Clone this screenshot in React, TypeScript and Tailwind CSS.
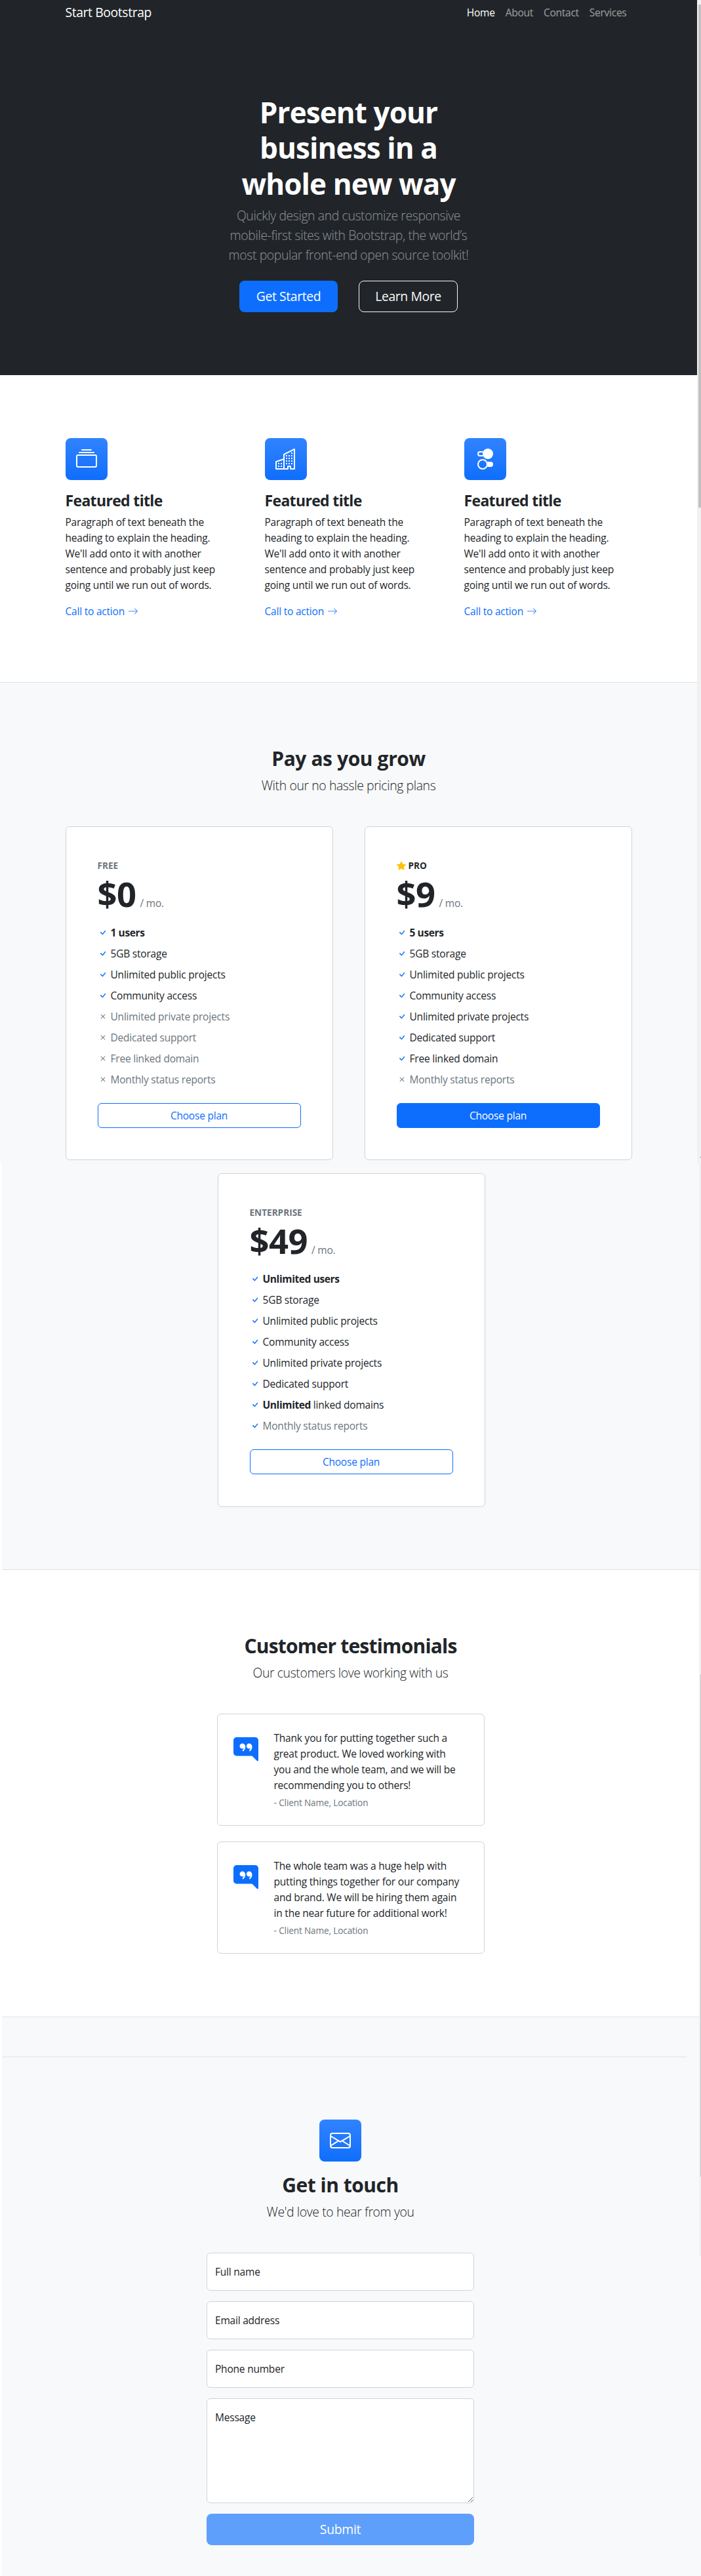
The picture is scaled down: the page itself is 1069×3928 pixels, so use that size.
import type { ReactNode } from "react";
import {
  BsArrowRight,
  BsChatRightQuoteFill,
  BsCheck,
  BsCollection,
  BsEnvelope,
  BsStarFill,
  BsToggles2,
  BsX,
} from "react-icons/bs";

const body = "text-[15.5px] leading-6 tracking-[-0.21px]";
const lead = "text-[19.4px] leading-[30px] font-light tracking-[-0.39px]";
const heading = "pt-px text-[30px] leading-[37px] font-bold";

function BuildingIcon() {
  return (
    <svg width="32" height="32" viewBox="0 0 16 16" fill="currentColor">
      <path
        fillRule="evenodd"
        d="M14.763.075A.5.5 0 0 1 15 .5v15a.5.5 0 0 1-.5.5h-3a.5.5 0 0 1-.5-.5V14h-1v1.5a.5.5 0 0 1-.5.5h-9a.5.5 0 0 1-.5-.5V10a.5.5 0 0 1 .342-.474L6 7.64V4.5a.5.5 0 0 1 .276-.447l8-4a.5.5 0 0 1 .487.022zM6 8.694 1 10.36V15h5V8.694zM7 15h2v-1.5a.5.5 0 0 1 .5-.5h2a.5.5 0 0 1 .5.5V15h2V1.309l-7 3.5V15z"
      />
      <path d="M2 11h1v1H2v-1zm2 0h1v1H4v-1zm-2 2h1v1H2v-1zm2 0h1v1H4v-1zm4-4h1v1H8V9zm2 0h1v1h-1V9zm-2 2h1v1H8v-1zm2 0h1v1h-1v-1zm2-2h1v1h-1V9zm0 2h1v1h-1v-1zM8 7h1v1H8V7zm2 0h1v1h-1V7zm2 0h1v1h-1V7zM8 5h1v1H8V5zm2 0h1v1h-1V5zm2 0h1v1h-1V5zm0-2h1v1h-1V3z" />
    </svg>
  );
}

function IconTile({ children }: { children: ReactNode }) {
  return (
    <div className="flex size-16 items-center justify-center rounded-lg bg-linear-to-b from-[#3083ff] to-[#0d6efd] text-[32px] text-white">
      {children}
    </div>
  );
}

function Feature({ icon }: { icon: ReactNode }) {
  return (
    <div className="w-64">
      <IconTile>{icon}</IconTile>
      <h2 className="mt-[17px] text-[23px] leading-7 font-bold tracking-[-0.66px]">Featured title</h2>
      <p className={`mt-[7px] ${body}`}>
        Paragraph of text beneath the
        <br />
        heading to explain the heading.
        <br />
        We'll add onto it with another
        <br />
        sentence and probably just keep
        <br />
        going until we run out of words.
      </p>
      <a className={`mt-4 flex items-center gap-[5px] text-[#0d6efd] ${body}`}>
        Call to action
        <BsArrowRight className="size-4 opacity-80" />
      </a>
    </div>
  );
}

type Item = { bold?: string; text?: string; icon?: "check" | "x"; muted?: boolean };

function Plan({
  name,
  price,
  items,
  star,
  filled,
  listClass = "mt-[17px]",
}: {
  name: string;
  price: string;
  items: Item[];
  star?: boolean;
  filled?: boolean;
  listClass?: string;
}) {
  return (
    <div className="h-[509px] w-[408px] rounded-md border border-[#d3d3d4] bg-white p-12">
      <div
        className={`flex items-center gap-1 text-[13.6px] leading-[21px] font-bold ${
          star ? "text-[#212529]" : "text-[#6c757d]"
        }`}
      >
        {star && <BsStarFill className="size-3.5 text-[#ffc107]" />}
        {name}
      </div>
      <div className="flex h-[63px] items-baseline gap-1.5 pt-px">
        <span className="text-[52.5px] leading-[63px] font-bold tracking-[-0.5px]">{price}</span>
        <span className={`text-[#6c757d] ${body}`}>/ mo.</span>
      </div>
      <ul className={`flex flex-col gap-2 ${listClass}`}>
        {items.map((item, i) => (
          <li key={i} className={`flex items-center gap-1 ${body} ${item.muted ? "text-[#6c757d]" : ""}`}>
            {item.icon === "x" ? (
              <BsX className="size-4" />
            ) : (
              <BsCheck className="size-4 text-[#0d6efd]" />
            )}
            <span>
              {item.bold && <strong className="font-bold tracking-[-0.39px]">{item.bold}</strong>}
              {item.bold && item.text && " "}
              {item.text}
            </span>
          </li>
        ))}
      </ul>
      <button
        className={`mt-6 flex h-[38px] w-full items-center justify-center rounded-md border border-[#0d6efd] ${body} ${
          filled ? "bg-[#0d6efd] text-white" : "text-[#0d6efd]"
        }`}
      >
        Choose plan
      </button>
    </div>
  );
}

const features = (users: string, included: number): Item[] => [
  { bold: users },
  ...[
    "5GB storage",
    "Unlimited public projects",
    "Community access",
    "Unlimited private projects",
    "Dedicated support",
    "Free linked domain",
    "Monthly status reports",
  ].map((text, i): Item => (i < included ? { text } : { text, icon: "x", muted: true })),
];

const enterprise: Item[] = [
  { bold: "Unlimited users" },
  { text: "5GB storage" },
  { text: "Unlimited public projects" },
  { text: "Community access" },
  { text: "Unlimited private projects" },
  { text: "Dedicated support" },
  { bold: "Unlimited", text: "linked domains" },
  { text: "Monthly status reports", muted: true },
];

function Quote({ lines }: { lines: string[] }) {
  return (
    <div className="flex h-[171px] w-[408px] rounded-md border border-[#d3d3d4] bg-white p-6">
      <BsChatRightQuoteFill className="mt-[11px] size-[38px] shrink-0 text-[#0d6efd]" />
      <div className="ml-6 whitespace-nowrap">
        <p className={body}>
          {lines.map((line) => (
            <span key={line} className="block">
              {line}
            </span>
          ))}
        </p>
        <div className="mt-1 text-[13.6px] leading-[21px] tracking-[-0.13px] text-[#6c757d]">
          - Client Name, Location
        </div>
      </div>
    </div>
  );
}

function Field({ label }: { label: string }) {
  return (
    <input
      placeholder={label}
      className={`block h-[58px] w-full rounded-md border border-[#ced4da] bg-white px-3 placeholder:text-[#212529] ${body}`}
    />
  );
}

export default function App() {
  return (
    <div className="relative h-[3928px] w-[1069px] overflow-hidden bg-white font-['Open_Sans','Segoe_UI',sans-serif] text-[#212529]">
      <div className="w-[1063px]">
        <header className="h-[572px] bg-[#212529] text-white">
          <nav className="mx-auto flex h-[38px] w-[864px] items-center justify-between pr-2">
            <span className="text-[19.4px] leading-[30px] tracking-[-0.41px]">Start Bootstrap</span>
            <ul className="flex gap-4 text-[15.5px] leading-6 tracking-[-0.26px] text-white/55">
              <li className="text-white">Home</li>
              <li>About</li>
              <li>Contact</li>
              <li>Services</li>
            </ul>
          </nav>
          <div className="flex flex-col items-center pt-[106px] text-center">
            <h1 className="text-[44px] leading-[54.3px] font-bold tracking-[-0.9px]">
              Present your
              <br />
              business in a
              <br />
              whole new way
            </h1>
            <p className={`mt-[7px] text-white/50 ${lead}`}>
              Quickly design and customize responsive
              <br />
              mobile-first sites with Bootstrap, the world’s
              <br />
              most popular front-end open source toolkit!
            </p>
            <div className="mt-6 flex gap-8 text-[19.4px] leading-[30px] tracking-[-0.41px]">
              <button className="h-12 w-[150px] rounded-lg bg-[#0d6efd]">Get Started</button>
              <button className="h-12 w-[151px] rounded-lg border border-[#f8f9fa] text-[#f8f9fa]">Learn More</button>
            </div>
          </div>
        </header>

        <section className="h-[469px] border-b border-[#dee2e6] pt-24">
          <div className="mx-auto flex w-[864px] gap-12">
            <Feature icon={<BsCollection />} />
            <Feature icon={<BuildingIcon />} />
            <Feature icon={<BsToggles2 />} />
          </div>
        </section>

        <section className="h-[732px] bg-[#f8f9fa] pt-24">
          <div className="text-center">
            <h2 className={`${heading} tracking-[-0.4px]`}>Pay as you grow</h2>
            <p className={`mt-2 ${lead}`}>With our no hassle pricing plans</p>
          </div>
          <div className="mx-auto mt-[47px] flex w-[864px] justify-between">
            <Plan name="FREE" price="$0" items={features("1 users", 3)} />
            <Plan name="PRO" price="$9" items={features("5 users", 6)} star filled />
          </div>
        </section>
      </div>

      <div className="ml-[3px]">
        <section className="h-[621px] w-[1063px] border-b border-[#dee2e6] bg-[#f8f9fa] pt-4">
          <div className="ml-[328.5px]">
            <Plan name="ENTERPRISE" price="$49" items={enterprise} listClass="mt-4" />
          </div>
        </section>

        <section className="flex h-[682px] w-[1063px] flex-col items-center border-b border-[#dee2e6] pt-24">
          <h2 className={`${heading} tracking-[-0.8px]`}>Customer testimonials</h2>
          <p className={`mt-2 ${lead}`}>Our customers love working with us</p>
          <div className="mt-[47px] flex flex-col gap-6">
            <Quote
              lines={[
                "Thank you for putting together such a",
                "great product. We loved working with",
                "you and the whole team, and we will be",
                "recommending you to others!",
              ]}
            />
            <Quote
              lines={[
                "The whole team was a huge help with",
                "putting things together for our company",
                "and brand. We will be hiring them again",
                "in the near future for additional work!",
              ]}
            />
          </div>
        </section>

        <section className="h-[852px] bg-[#f8f9fa] pt-[60px]">
          <hr className="w-[1044px] border-[#dee2e6]" />
          <div className="ml-[312px] flex w-[408px] flex-col items-center pt-[95px]">
            <IconTile>
              <BsEnvelope />
            </IconTile>
            <h2 className={`mt-4 ${heading} tracking-[-0.5px]`}>Get in touch</h2>
            <p className={`mt-2 ${lead}`}>We'd love to hear from you</p>
            <form className="mt-[47px] flex w-full flex-col gap-4">
              <Field label="Full name" />
              <Field label="Email address" />
              <Field label="Phone number" />
              <textarea
                placeholder="Message"
                className={`block h-40 w-full rounded-md border border-[#ced4da] bg-white px-3 py-4 placeholder:text-[#212529] ${body}`}
              />
              <button
                type="button"
                className="h-12 w-full rounded-lg bg-[#5f9ffc] text-[19.4px] leading-[30px] tracking-[-0.3px] text-white"
              >
                Submit
              </button>
            </form>
          </div>
        </section>
      </div>

      <div className="absolute top-0 right-0 h-[1773px] w-1.5 bg-[#f1f1f1] pt-[7px] pl-0.5">
        <div className="h-[767px] bg-[#c1c1c1]" />
      </div>
      <div className="absolute top-[1764px] right-0 h-px w-px bg-[#505050]" />
      <div className="absolute top-[1773px] right-0 h-[1667px] w-[3px] bg-[#f1f1f1] pt-[780px] pl-0.5">
        <div className="h-[766px] bg-[#c1c1c1]" />
      </div>
    </div>
  );
}
